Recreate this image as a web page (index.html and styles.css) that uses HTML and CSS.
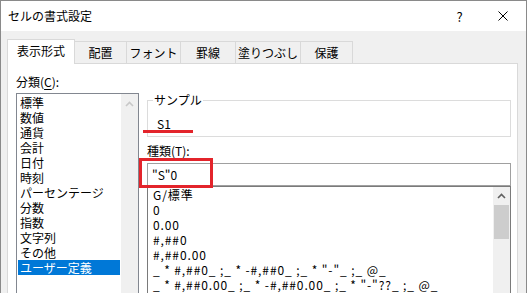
FILE: index.html
```html
<!DOCTYPE html>
<html lang="ja">
<head>
    <meta charset="UTF-8">
    <title>セルの書式設定</title>
    <link rel="stylesheet" href="styles.css">
</head>
<body>
    <div class="window">
        <div class="titlebar">
            <div class="title">セルの書式設定</div>
            <div class="title-btn help">?</div>
            <div class="title-btn close">
                <svg width="10" height="10" viewBox="0 0 10 10"><path d="M0.5 0.5L9.5 9.5M9.5 0.5L0.5 9.5" stroke="#000" stroke-width="1"/></svg>
            </div>
        </div>

        <div class="body">
            <div class="tabs">
                <div class="tab active">表示形式</div>
                <div class="tab w52">配置</div>
                <div class="tab w54">フォント</div>
                <div class="tab w55">罫線</div>
                <div class="tab w65">塗りつぶし</div>
                <div class="tab w52">保護</div>
            </div>

            <div class="panel">
                <div class="left">
                    <div class="label">分類(<u>C</u>):</div>
                    <div class="listbox cat-list">
                        <div class="items">
                            <div class="item">標準</div>
                            <div class="item">数値</div>
                            <div class="item">通貨</div>
                            <div class="item">会計</div>
                            <div class="item">日付</div>
                            <div class="item">時刻</div>
                            <div class="item">パーセンテージ</div>
                            <div class="item">分数</div>
                            <div class="item">指数</div>
                            <div class="item">文字列</div>
                            <div class="item">その他</div>
                            <div class="item selected">ユーザー定義</div>
                        </div>
                        <div class="scrollbar">
                            <svg class="arrow" width="9" height="6" viewBox="0 0 9 6"><path d="M1 5L4.5 1.5L8 5" fill="none" stroke="#c8c8c8" stroke-width="1.6"/></svg>
                        </div>
                    </div>
                </div>

                <div class="right">
                    <fieldset class="sample">
                        <legend>サンプル</legend>
                        <div class="sample-value">S1</div>
                    </fieldset>

                    <div class="label type-label">種類(<u>T</u>):</div>
                    <div class="textbox">"S"0</div>

                    <div class="listbox fmt-list">
                        <div class="items">
                            <div class="item">G/標準</div>
                            <div class="item">0</div>
                            <div class="item">0.00</div>
                            <div class="item">#,##0</div>
                            <div class="item">#,##0.00</div>
                            <div class="item">_ * #,##0_ ;_ * -#,##0_ ;_ * "-"_ ;_ @_</div>
                            <div class="item">_ * #,##0.00_ ;_ * -#,##0.00_ ;_ * "-"??_ ;_ @_</div>
                        </div>
                        <div class="scrollbar">
                            <svg class="arrow" width="9" height="6" viewBox="0 0 9 6"><path d="M1 5L4.5 1.5L8 5" fill="none" stroke="#606060" stroke-width="1.6"/></svg>
                            <div class="thumb"></div>
                        </div>
                    </div>

                    <div class="mark-underline"></div>
                    <div class="mark-box"></div>
                </div>
            </div>
        </div>
    </div>
</body>
</html>
```

FILE: styles.css
```css
body {
    margin: 0;
    font-family: "Noto Sans CJK JP", "Noto Sans", sans-serif;
    font-size: 12px;
    color: #000000;
    overflow: hidden;
}

.window {
    width: 527px;
    height: 293px;
    box-sizing: border-box;
    border: 1px solid #8a8a8a;
    border-bottom: none;
    background-color: #f0f0f0;
    display: flex;
    flex-direction: column;
}

.titlebar {
    height: 30px;
    flex-shrink: 0;
    background-color: #ffffff;
    display: flex;
    align-items: center;
    padding-left: 7px;
}

.title {
    flex: 1;
    line-height: 16px;
}

.title-btn {
    width: 46px;
    height: 30px;
    display: flex;
    justify-content: center;
    align-items: center;
}

.help {
    font-size: 13px;
    padding-left: 5px;
    box-sizing: border-box;
}

.body {
    flex: 1;
    min-height: 0;
    display: flex;
    flex-direction: column;
    padding: 8px 8px 0 6px;
}

.tabs {
    display: flex;
    align-items: flex-end;
    height: 25px;
    margin-bottom: -1px;
    position: relative;
    z-index: 1;
}

.tab {
    box-sizing: border-box;
    height: 22px;
    margin-bottom: 1px;
    border-top: 1px solid #d9d9d9;
    border-right: 1px solid #d9d9d9;
    display: flex;
    justify-content: center;
    align-items: center;
    padding-top: 1px;
    line-height: 16px;
}

.tab.active {
    width: 68px;
    height: 25px;
    margin-bottom: 0;
    padding-top: 0;
    padding-bottom: 2px;
    background-color: #ffffff;
    border-left: 1px solid #d9d9d9;
}

.w52 { width: 52px; }
.w54 { width: 54px; }
.w55 { width: 55px; }
.w65 { width: 65px; }

.panel {
    flex: 1;
    min-height: 0;
    background-color: #ffffff;
    border: 1px solid #d9d9d9;
    border-bottom: none;
    display: flex;
    padding: 10px 6px 0 8px;
}

.label {
    line-height: 16px;
    margin-bottom: 3px;
}

.label u {
    text-underline-offset: 2px;
}

.left {
    width: 123px;
    display: flex;
    flex-direction: column;
}

.listbox {
    flex: 1;
    display: flex;
    border: 1px solid #828790;
    border-bottom: none;
    background-color: #ffffff;
}

.items {
    flex: 1;
    min-width: 0;
    overflow: hidden;
    padding: 1px 1px 0 1px;
}

.item {
    height: 15px;
    line-height: 15px;
    padding-left: 2px;
    white-space: nowrap;
}

.item.selected {
    background-color: #0078d7;
    color: #ffffff;
}

.scrollbar {
    width: 17px;
    flex-shrink: 0;
    background-color: #f0f0f0;
    display: flex;
    flex-direction: column;
    align-items: center;
}

.arrow {
    margin-top: 7px;
    margin-bottom: 5px;
}

.thumb {
    width: 15px;
    height: 34px;
    background-color: #cdcdcd;
}

.right {
    width: 364px;
    margin-left: 8px;
    margin-top: 18px;
    display: flex;
    flex-direction: column;
    position: relative;
}

.sample {
    margin: 0;
    padding: 0 8px 4px 9px;
    border: 1px solid #dcdcdc;
    min-width: 0;
}

.sample legend {
    padding: 0 1px;
    margin-left: -4px;
    line-height: 16px;
}

.sample-value {
    line-height: 16px;
    margin-top: 8px;
}

.type-label {
    margin-top: 6px;
    margin-bottom: 4px;
}

.textbox {
    height: 23px;
    box-sizing: border-box;
    border: 1px solid #a0a0a0;
    padding-left: 4px;
    line-height: 21px;
    flex-shrink: 0;
}

.fmt-list {
    border-color: #7a7a7a;
}

.fmt-list .items {
    padding-top: 0;
    padding-left: 3px;
    letter-spacing: 0.9px;
}

.fmt-list .arrow {
    margin-top: 6px;
    margin-bottom: 6px;
}

.mark-underline {
    position: absolute;
    left: -4px;
    top: 38px;
    width: 50px;
    height: 3px;
    background-color: #e3242b;
}

.mark-box {
    position: absolute;
    left: -8px;
    top: 66px;
    width: 74px;
    height: 30px;
    box-sizing: border-box;
    border: 3px solid #e3242b;
}
```
